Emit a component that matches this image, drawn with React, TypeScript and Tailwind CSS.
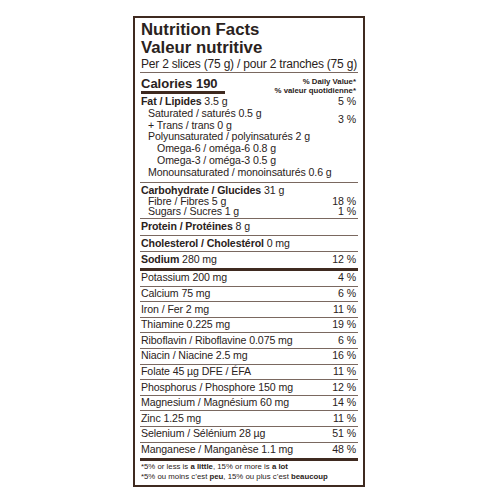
const lineColor = "border-[#7a6860]";

const minerals: [string, string][] = [
  ["Potassium 200 mg", "4 %"],
  ["Calcium 75 mg", "6 %"],
  ["Iron / Fer 2 mg", "11 %"],
  ["Thiamine 0.225 mg", "19 %"],
  ["Riboflavin / Riboflavine 0.075 mg", "6 %"],
  ["Niacin / Niacine 2.5 mg", "16 %"],
  ["Folate 45 µg DFE / ÉFA", "11 %"],
  ["Phosphorus / Phosphore 150 mg", "12 %"],
  ["Magnesium / Magnésium 60 mg", "14 %"],
  ["Zinc 1.25 mg", "11 %"],
  ["Selenium / Sélénium 28 µg", "51 %"],
  ["Manganese / Manganèse 1.1 mg", "48 %"],
];

const App = () => {
  return (
    <div className="min-h-[500px] w-[500px] bg-white pl-[133px] pt-[16px] font-['Liberation_Sans',Arial,sans-serif] text-[#2a2220]">
      <div className="w-[232px] border-2 border-[#3f2a20] px-[5px]">
        {/* header */}
        <div className={`border-b ${lineColor} pl-[1px] pt-[3px]`}>
          <div className="text-[16.8px] font-bold leading-[18px]">Nutrition Facts</div>
          <div className="text-[16.8px] font-bold leading-[18px]">Valeur nutritive</div>
          <div className="whitespace-nowrap text-[12px] leading-[15px] tracking-[-0.2px]">
            Per 2 slices (75 g) / pour 2 tranches (75 g)
          </div>
        </div>

        {/* calories */}
        <div className="flex h-[21px] items-start justify-between pt-[4px]">
          <div className="pl-[1px]">
            <div className="text-[13px] font-bold leading-[13px]">Calories 190</div>
            <div className="mt-[1px] h-[3px] w-[84px] bg-[#3f2a20]" />
          </div>
          <div className="pr-[2px] text-right text-[7.8px] font-bold leading-[9px]">
            <div>% Daily Value*</div>
            <div>% valeur quotidienne*</div>
          </div>
        </div>

        {/* fat */}
        <div className={`h-[89px] border-b ${lineColor} pl-[1px] pr-[2px] pt-[2px] text-[10.6px] leading-[11.8px] tracking-[-0.1px]`}>
          <div className="flex justify-between">
            <span>
              <b>Fat / Lipides</b> 3.5 g
            </span>
            <span>5 %</span>
          </div>
          <div className="flex items-center justify-between">
            <div className="pl-[7px]">
              <div>Saturated / saturés 0.5 g</div>
              <div>+ Trans / trans 0 g</div>
            </div>
            <span>3 %</span>
          </div>
          <div className="pl-[7px]">Polyunsaturated / polyinsaturés 2 g</div>
          <div className="pl-[16px]">Omega-6 / oméga-6 0.8 g</div>
          <div className="pl-[16px]">Omega-3 / oméga-3 0.5 g</div>
          <div className="pl-[7px]">Monounsaturated / monoinsaturés 0.6 g</div>
        </div>

        {/* carbohydrate */}
        <div className={`h-[36px] border-b ${lineColor} pl-[1px] pr-[2px] pt-[2px] text-[10.6px] leading-[10.6px] tracking-[-0.1px]`}>
          <div>
            <b>Carbohydrate / Glucides</b> 31 g
          </div>
          <div className="flex justify-between pl-[7px]">
            <span>Fibre / Fibres 5 g</span>
            <span>18 %</span>
          </div>
          <div className="flex justify-between pl-[7px]">
            <span>Sugars / Sucres 1 g</span>
            <span>1 %</span>
          </div>
        </div>

        <div className={`flex h-[17px] items-center border-b ${lineColor} pl-[1px] text-[10.6px] tracking-[-0.1px]`}>
          <span>
            <b>Protein / Protéines</b> 8 g
          </span>
        </div>
        <div className={`flex h-[16px] items-center border-b ${lineColor} pl-[1px] text-[10.6px] tracking-[-0.1px]`}>
          <span>
            <b>Cholesterol / Cholestérol</b> 0 mg
          </span>
        </div>
        <div className="flex h-[19px] items-center justify-between border-b-[3px] border-[#3f2a20] pl-[1px] pr-[2px] text-[10.6px] tracking-[-0.1px]">
          <span>
            <b>Sodium</b> 280 mg
          </span>
          <span>12 %</span>
        </div>

        {minerals.map(([label, dv], i) => (
          <div
            key={label}
            className={
              i === minerals.length - 1
                ? "flex h-[18.4px] items-center justify-between border-b-[3px] border-[#3f2a20] pl-[1px] pr-[2px] text-[10.6px] tracking-[-0.1px]"
                : `flex h-[15.6px] items-center justify-between border-b ${lineColor} pl-[1px] pr-[2px] text-[10.6px] tracking-[-0.1px]`
            }
          >
            <span>{label}</span>
            <span>{dv}</span>
          </div>
        ))}

        {/* footnote */}
        <div className="pb-[3px] pl-[1px] pt-[1px] text-[7.8px] leading-[10px]">
          <div>
            *5% or less is <b>a little</b>, 15% or more is <b>a lot</b>
          </div>
          <div>
            *5% ou moins c’est <b>peu</b>, 15% ou plus c’est <b>beaucoup</b>
          </div>
        </div>
      </div>
    </div>
  );
};

export default App;
